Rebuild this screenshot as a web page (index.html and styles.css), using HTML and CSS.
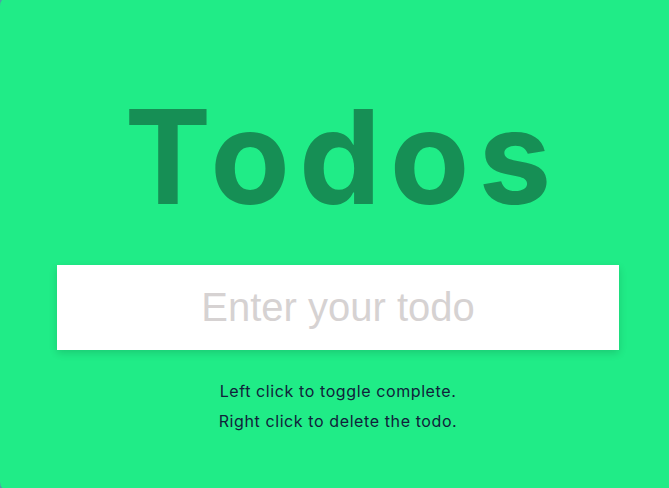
FILE: index.html
```html
<!DOCTYPE html>
<html>
<head>
<meta charset="utf-8">
<link rel="stylesheet" href="styles.css">
</head>
<body>
<div class="app">
  <h1 class="title">Todos</h1>
  <input class="todo-input" type="text" placeholder="Enter your todo">
  <div class="hints">
    <p>Left click to toggle complete.</p>
    <p>Right click to delete the todo.</p>
  </div>
</div>
</body>
</html>
```
FILE: styles.css
```css
html, body {
  margin: 0;
  padding: 0;
  overflow: hidden;
  background: #4d9fa6;
}
.app {
  width: 676px;
  height: 496px;
  margin-top: -4px;
  border-radius: 10px;
  background: #20ec87;
  display: flex;
  flex-direction: column;
  align-items: center;
  box-sizing: border-box;
  padding-top: 96px;
  font-family: Inter, "Noto Sans", sans-serif;
}
.title {
  margin: 0;
  padding-left: 9px;
  font-size: 130px;
  line-height: 130px;
  font-weight: 700;
  color: #168f55;
  letter-spacing: 9px;
}
.todo-input {
  margin-top: 43px;
  width: 562px;
  height: 85px;
  box-sizing: border-box;
  border: none;
  outline: none;
  background: #fff;
  text-align: center;
  font-family: "Liberation Sans", Arial, sans-serif;
  font-size: 40px;
  box-shadow: 0 3px 8px rgba(0, 0, 0, 0.14);
}
.todo-input::placeholder {
  color: #d6d2d2;
}
.hints {
  margin-top: 26px;
  text-align: center;
  color: #10223a;
  font-size: 16px;
  letter-spacing: 0.6px;
  line-height: 30px;
}
.hints p {
  margin: 0;
}
```
